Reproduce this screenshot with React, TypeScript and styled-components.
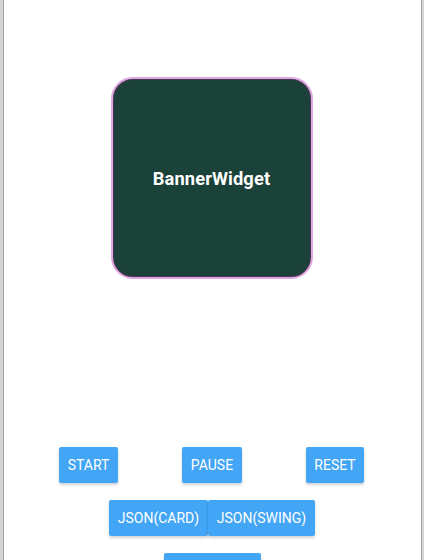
import React from "react";
import styled, { createGlobalStyle } from "styled-components";

const Global = createGlobalStyle`
  html, body { margin: 0; padding: 0; background: #ffffff; }
  body { font-family: Roboto, "Noto Sans", sans-serif; }
`;

const Frame = styled.div`
  width: 424px;
  height: 560px;
  overflow: hidden;
  background: #d4d4d4;
  padding: 0 2px 0 3px;
  box-sizing: border-box;
  display: flex;
`;

const Screen = styled.div`
  flex: 1;
  background: #ffffff;
  border-left: 1px solid #a3a3a3;
  border-right: 1px solid #a3a3a3;
  display: flex;
  flex-direction: column;
  align-items: center;
  padding-top: 77px;
`;

const Banner = styled.div`
  width: 202px;
  height: 202px;
  flex-shrink: 0;
  margin-right: 2px;
  box-sizing: border-box;
  border-radius: 22px;
  background: #1b4238;
  border: 2px solid #dea7e2;
  box-shadow: inset 0 0 0 1px #4a3650;
  display: flex;
  align-items: center;
  justify-content: center;
  color: #ffffff;
  font-weight: 700;
  font-size: 18.3px;
  letter-spacing: 0.1px;
`;

const Controls = styled.div`
  margin-top: 168px;
  width: 100%;
  flex-shrink: 0;
  display: flex;
  flex-direction: column;
  align-items: center;
  gap: 17px;
`;

const Row = styled.div<{ $spread?: boolean }>`
  display: flex;
  width: 100%;
  box-sizing: border-box;
  justify-content: ${(p) => (p.$spread ? "space-between" : "center")};
  padding: ${(p) => (p.$spread ? "0 57px 0 55px" : "0 1px 0 0")};
`;

const Button = styled.button<{ $w?: number }>`
  height: 36px;
  ${(p) => (p.$w ? `width: ${p.$w}px;` : "padding: 0 10px;")}
  border: none;
  border-radius: 2px;
  background: #42a5f5;
  color: #ffffff;
  font-family: Roboto, "Noto Sans", sans-serif;
  font-size: 14px;
  font-weight: 400;
  text-transform: uppercase;
  box-shadow: 0 2px 3px rgba(0, 0, 0, 0.18);
  display: flex;
  align-items: center;
  justify-content: center;
  flex-shrink: 0;
`;

export default function App() {
  return (
    <>
      <Global />
      <Frame>
        <Screen>
          <Banner>BannerWidget</Banner>
          <Controls>
            <Row $spread>
              <Button $w={59}>Start</Button>
              <Button $w={60}>Pause</Button>
              <Button $w={58}>Reset</Button>
            </Row>
            <Row>
              <Button $w={99}>JSON(CARD)</Button>
              <Button $w={107}>JSON(SWING)</Button>
            </Row>
            <Row>
              <Button $w={97}>JSON(FLIP)</Button>
            </Row>
          </Controls>
        </Screen>
      </Frame>
    </>
  );
}
